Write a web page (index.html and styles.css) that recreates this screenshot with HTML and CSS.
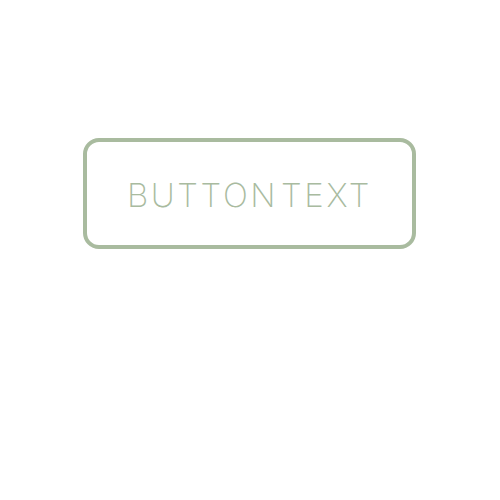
FILE: index.html
```html
<!DOCTYPE html>
<html>
<head>
<meta charset="utf-8">
<link rel="stylesheet" href="styles.css">
</head>
<body>
<div class="page">
  <button class="btn">BUTTON TEXT</button>
</div>
</body>
</html>
```

FILE: styles.css
```css
html, body {
  margin: 0;
  padding: 0;
  background: #ffffff;
}
.page {
  width: 500px;
  height: 500px;
  display: flex;
  justify-content: center;
  align-items: flex-start;
  padding-top: 138px;
  box-sizing: border-box;
}
.btn {
  width: 333px;
  height: 111px;
  margin-left: -1px;
  box-sizing: border-box;
  border: 4px solid #a9bb9f;
  border-radius: 16px;
  background: #ffffff;
  color: #a9bb9f;
  font-family: "Inter", sans-serif;
  font-weight: 200;
  font-size: 33px;
  letter-spacing: 2.6px;
  word-spacing: -9px;
  padding: 3px 0 0 0;
}
```
